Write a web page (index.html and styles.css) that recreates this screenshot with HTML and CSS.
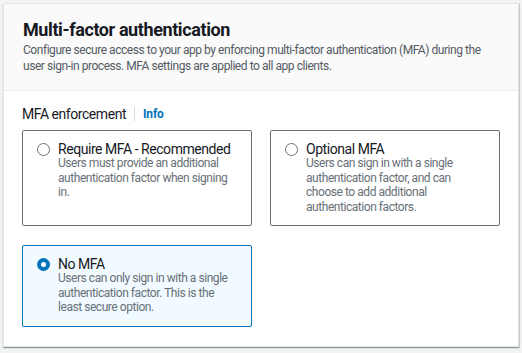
FILE: index.html
```html
<!DOCTYPE html>
<html>
<head>
<meta charset="utf-8">
<link rel="stylesheet" href="styles.css">
</head>
<body>
<div class="card">
  <div class="card-header">
    <h2 class="title">Multi-factor authentication</h2>
    <p class="desc">Configure secure access to your app by enforcing multi-factor authentication (MFA) during the user sign-in process. MFA settings are applied to all app clients.</p>
  </div>
  <div class="card-body">
    <div class="field-label"><span class="label-text">MFA enforcement</span><span class="sep"></span><a class="info">Info</a></div>
    <div class="tiles">
      <label class="tile">
        <span class="radio"></span>
        <span class="tile-text">
          <span class="tile-title">Require MFA - Recommended</span>
          <span class="tile-desc">Users must provide an additional authentication factor when signing in.</span>
        </span>
      </label>
      <label class="tile">
        <span class="radio"></span>
        <span class="tile-text">
          <span class="tile-title">Optional MFA</span>
          <span class="tile-desc">Users can sign in with a single authentication factor, and can choose to add additional authentication factors.</span>
        </span>
      </label>
      <label class="tile selected">
        <span class="radio checked"></span>
        <span class="tile-text">
          <span class="tile-title">No MFA</span>
          <span class="tile-desc">Users can only sign in with a single authentication factor. This is the least secure option.</span>
        </span>
      </label>
    </div>
  </div>
</div>
</body>
</html>
```
FILE: styles.css
```css
html, body {
  margin: 0;
  padding: 0;
}
body {
  background: #f2f3f3;
  font-family: "Roboto", "Noto Sans", sans-serif;
  color: #16191f;
  width: 522px;
  height: 353px;
  overflow: hidden;
  padding-top: 3px;
  padding-left: 3px;
  box-sizing: border-box;
}
.card {
  width: 516px;
  background: #fff;
  border: 1px solid #e4e6e6;
  box-shadow: 0 1px 1px rgba(0,28,36,0.3), 1px 1px 1px rgba(0,28,36,0.15);
  box-sizing: border-box;
}
.card-header {
  background: #fafafa;
  border-bottom: 1px solid #eaeded;
  padding: 15px 19px 16px 19px;
}
.title {
  margin: 0;
  font-size: 18px;
  line-height: 22px;
  font-weight: 700;
  letter-spacing: -0.4px;
  color: #16191f;
}
.desc {
  margin: 1px 0 0 0;
  font-size: 12px;
  line-height: 16px;
  letter-spacing: -0.45px;
  color: #545b64;
}
.card-body {
  padding: 13px 19px 19px 18px;
}
.field-label {
  display: flex;
  align-items: center;
  height: 20px;
  font-size: 14px;
  line-height: 20px;
  letter-spacing: -0.45px;
}
.label-text {
  color: #16191f;
}
.sep {
  width: 1px;
  height: 14px;
  background: #d5dbdb;
  margin: 0 8px 0 8px;
}
.info {
  color: #0073bb;
  font-weight: 700;
  font-size: 12px;
  letter-spacing: -0.2px;
}
.tiles {
  margin-top: 6px;
  display: grid;
  grid-template-columns: 230px 230px;
  column-gap: 18px;
  row-gap: 19px;
}
.tile {
  display: flex;
  align-items: flex-start;
  border: 1px solid #687078;
  border-radius: 2px;
  padding: 9px 12px 11px 14px;
  box-sizing: border-box;
}
.tile.selected {
  border-color: #0073bb;
  background: #f1faff;
}
.radio {
  flex: none;
  width: 13px;
  height: 13px;
  border: 1.5px solid #687078;
  border-radius: 50%;
  box-sizing: border-box;
  margin-top: 3px;
  margin-right: 8px;
  background: #fff;
}
.radio.checked {
  border: 4px solid #0073bb;
}
.tile-text {
  display: flex;
  flex-direction: column;
}
.tile-title {
  font-size: 14px;
  line-height: 18px;
  letter-spacing: -0.45px;
  color: #16191f;
}
.tile-desc {
  font-size: 12px;
  line-height: 14.5px;
  letter-spacing: -0.45px;
  color: #687078;
  margin-top: -2px;
}
```
